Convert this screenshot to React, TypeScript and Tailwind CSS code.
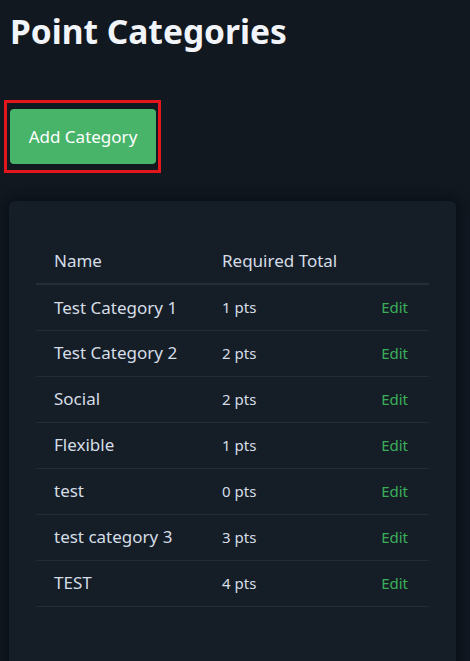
import React from "react";

type Category = { name: string; points: number };

const categories: Category[] = [
  { name: "Test Category 1", points: 1 },
  { name: "Test Category 2", points: 2 },
  { name: "Social", points: 2 },
  { name: "Flexible", points: 1 },
  { name: "test", points: 0 },
  { name: "test category 3", points: 3 },
  { name: "TEST", points: 4 },
];

const App: React.FC = () => {
  return (
    <div className="h-[661px] w-full bg-[#111820] font-['Noto_Sans',sans-serif] text-[#d5dde6] overflow-hidden">
      <div className="px-[10px] pt-[8px]">
        {/* Title */}
        <h1 className="text-[33.5px] font-bold leading-[46px] text-[#f1f4f8]">Point Categories</h1>

        {/* Add button, boxed in red */}
        <div className="mt-[46px] ml-[-6px] w-[157px] border-[3px] border-[#e3161d] pl-[3px] pt-[6px] pb-[6px]">
          <button className="w-[146px] h-[55px] rounded-[4px] bg-[#48b46a] text-white text-[17px]">
            Add Category
          </button>
        </div>

        {/* Table card */}
        <div className="mt-[28px] ml-[-1px] w-[447px] h-[480px] rounded-t-[6px] bg-[#151e27] px-[27px] pt-[37px] shadow-[0_0_12px_4px_#0b1016]">
          <table className="w-full table-fixed border-collapse text-left">
            <thead>
              <tr className="h-[46px] border-b-2 border-[#222d38]">
                <th className="pl-[18px] w-[186px] font-normal text-[17px]">Name</th>
                <th className="font-normal text-[17px]">Required Total</th>
                <th className="w-[90px]" />
              </tr>
            </thead>
            <tbody>
              {categories.map((c) => (
                <tr key={c.name} className="h-[46px] border-b border-[#222c36]">
                  <td className="pl-[18px] text-[17px]">{c.name}</td>
                  <td className="text-[15px]">{c.points} pts</td>
                  <td className="pr-[21px] text-right text-[15px] text-[#3bae5a]">Edit</td>
                </tr>
              ))}
            </tbody>
          </table>
        </div>
      </div>
    </div>
  );
};

export default App;
